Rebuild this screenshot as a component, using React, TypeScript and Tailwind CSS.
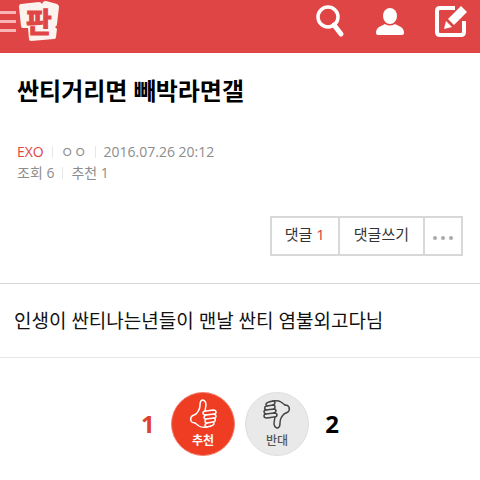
import type { ReactNode } from 'react';

const Logo = () => (
  <svg width="42" height="44" viewBox="0 0 42 44" role="img" aria-label="판">
    <path
      d="M2 4 L20 2 Q22 2 23 4 L24 2 Q25 1 27 1 L38 4 Q40 5 40 7 L38 24 Q38 26 36 27 L38 29 L37 37 Q37 39 35 39 L12 41 Q10 41 10 39 L9 28 L4 28 Q2 28 2 26 L0 7 Q0 4 2 4 Z"
      fill="#fdf3ee"
    />
    <text
      x="20"
      y="33"
      textAnchor="middle"
      fontSize="28"
      fontWeight="700"
      fill="#e04545"
      stroke="#e04545"
      strokeWidth="1"
    >
      판
    </text>
  </svg>
);

const SearchIcon = () => (
  <svg width="30" height="36" viewBox="0 0 30 36" fill="none" stroke="#fff" aria-hidden="true">
    <circle cx="12" cy="13" r="10" strokeWidth="3.5" />
    <path d="M18 21 L25 30" strokeWidth="5" strokeLinecap="round" />
  </svg>
);

const UserIcon = () => (
  <svg width="30" height="30" viewBox="0 0 30 30" fill="#fff" aria-hidden="true">
    <ellipse cx="15" cy="9" rx="7" ry="8" />
    <path d="M10 17 Q15 20 20 17 L26 20 Q29 22 29 26 Q29 28 27 28 H3 Q1 28 1 26 Q1 22 4 20 Z" />
  </svg>
);

const WriteIcon = () => (
  <svg width="34" height="34" viewBox="0 0 34 34" fill="none" aria-hidden="true">
    <path
      d="M21 4 H6 Q3 4 3 7 V28 Q3 31 6 31 H27 Q30 31 30 28 V17"
      stroke="#fff"
      strokeWidth="4"
    />
    <path d="M27 2 L33 8 L20 21 L14 15 Z" fill="#fff" />
    <path d="M12 17 L18 23 L10 25 Z" fill="#fff" />
  </svg>
);

const ThumbIcon = ({ className = '' }: { className?: string }) => (
  <svg
    width="28"
    height="30"
    viewBox="0 0 28 30"
    fill="none"
    stroke="currentColor"
    strokeWidth="1.5"
    strokeLinejoin="round"
    strokeLinecap="round"
    className={className}
    aria-hidden="true"
  >
    <path d="M6 24 Q3 24 2 22 Q1 19 3 17 L7 15 Q11 11 11 6 Q11 1 14 1 Q17 2 17 6 L16 12" />
    <path d="M6 24 L10 27 Q13 29 18 28" />
    <path d="M17 12 L24 11 Q27 11 27 13 Q27 15 25 15 L17 16 Q14 16 14 14 Q14 12 17 12" />
    <path d="M25 15 Q27 16 27 17 Q27 19 25 19 L17 20 Q15 20 15 18 Q15 17 17 16" />
    <path d="M25 19 Q27 20 26 22 Q26 23 24 23 L18 24 Q16 24 16 22 Q16 21 17 20" />
    <path d="M24 23 Q26 25 24 26 Q23 27 18 28 Q16 28 16 26 Q16 25 18 24" />
  </svg>
);

const Separator = () => <span className="mx-2 h-3 w-px bg-gray-200" />;

interface VoteButtonProps {
  label: string;
  className: string;
  children: ReactNode;
}

const VoteButton = ({ label, className, children }: VoteButtonProps) => (
  <button
    type="button"
    className={`flex h-16 w-16 flex-col items-center gap-1 rounded-full border pt-[6px] text-xs leading-4 ${className}`}
  >
    {children}
    <span>{label}</span>
  </button>
);

export default function App() {
  return (
    <div className="min-h-screen bg-white font-['Open_Sans','Noto_Sans_CJK_KR',sans-serif] text-black">
      <header className="flex h-[53px] items-start justify-between bg-[#e04545]">
        <div className="flex items-start gap-[3px]">
          <button type="button" aria-label="메뉴" className="flex flex-col gap-[6px] pt-[11px]">
            <span className="h-[3px] w-4 bg-[#f9b5b5]" />
            <span className="h-[3px] w-4 bg-[#f9b5b5]" />
            <span className="h-[3px] w-4 bg-[#f9b5b5]" />
          </button>
          <a href="#" className="block font-['Noto_Sans_CJK_KR',sans-serif]">
            <Logo />
          </a>
        </div>
        <nav className="flex items-start gap-[29px] pt-1 pr-3">
          <button type="button" aria-label="검색">
            <SearchIcon />
          </button>
          <button type="button" aria-label="내 정보" className="pt-[3px]">
            <UserIcon />
          </button>
          <button type="button" aria-label="글쓰기">
            <WriteIcon />
          </button>
        </nav>
      </header>

      <main>
        <section className="border-b border-[#d8d8d8] px-[17px] pt-5 pb-[27px]">
          <h1 className="text-2xl leading-9 font-bold">싼티거리면 빼박라면갤</h1>
          <div className="mt-8 text-sm leading-[21px] text-[#8c8c8c]">
            <p className="flex items-center">
              <a href="#" className="text-[#e04545]">
                EXO
              </a>
              <Separator />
              <span>ㅇㅇ</span>
              <Separator />
              <time dateTime="2016-07-26T20:12">2016.07.26 20:12</time>
            </p>
            <p className="flex items-center">
              <span>조회 6</span>
              <Separator />
              <span>추천 1</span>
            </p>
          </div>
          <div className="mt-[33px] flex justify-end">
            <div className="flex h-10 divide-x-2 divide-[#d8d8d8] border-2 border-[#d8d8d8] text-[15px] text-[#333]">
              <button type="button" className="px-[13px] pb-1">
                댓글 <span className="text-[#d04040]">1</span>
              </button>
              <button type="button" className="px-[14px] pb-1">
                댓글쓰기
              </button>
              <button
                type="button"
                aria-label="더보기"
                className="flex items-center justify-center gap-1 px-2 pt-1"
              >
                <span className="h-1 w-1 rounded-full bg-[#aaa]" />
                <span className="h-1 w-1 rounded-full bg-[#aaa]" />
                <span className="h-1 w-1 rounded-full bg-[#aaa]" />
              </button>
            </div>
          </div>
        </section>

        <p className="border-b border-gray-200 px-[14px] pt-[22px] pb-[21px] text-[19px] leading-[30px] text-[#111]">
          인생이 싼티나는년들이 맨날 싼티 염불외고다님
        </p>

        <section className="flex items-center justify-center gap-[10px] pt-[34px]">
          <span className="w-5 text-2xl font-bold text-[#dd4230]">1</span>
          <VoteButton
            label="추천"
            className="border-[#f4806e] bg-[#ee3d23] font-bold text-white"
          >
            <ThumbIcon />
          </VoteButton>
          <VoteButton
            label="반대"
            className="border-[#dedede] bg-[#e9e9e9] font-medium text-[#555]"
          >
            <ThumbIcon className="rotate-180 text-[#444]" />
          </VoteButton>
          <span className="w-5 text-right text-2xl font-bold">2</span>
        </section>
      </main>
    </div>
  );
}
